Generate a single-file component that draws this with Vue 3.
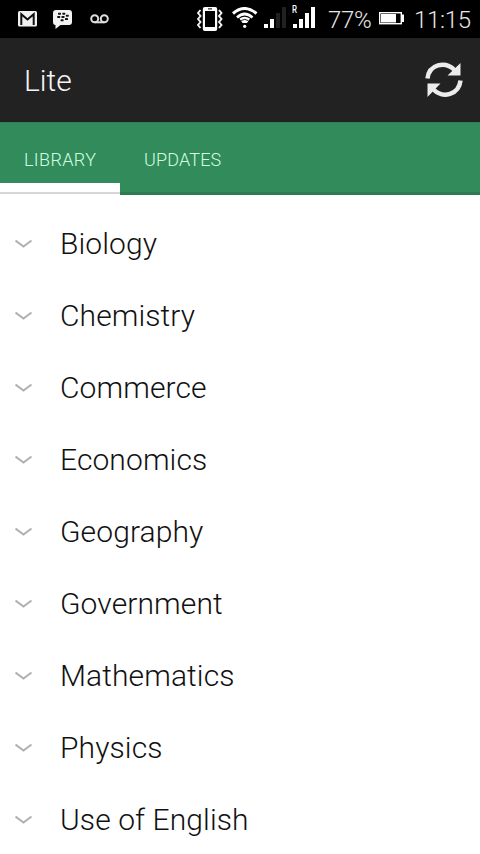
<script setup>
const subjects = [
  'Biology',
  'Chemistry',
  'Commerce',
  'Economics',
  'Geography',
  'Government',
  'Mathematics',
  'Physics',
  'Use of English',
]
</script>

<template>
  <div class="screen">
    <header class="status">
      <svg class="mail" width="20" height="16" viewBox="0 0 20 16">
        <rect width="19" height="15.5" rx="1.5" fill="#f2f2f2" />
        <path d="M3.300 14V3.200L9.500 8.500l6.200-5.300V14" fill="none" stroke="#111" stroke-width="2" />
      </svg>
      <svg class="bbm" width="20" height="20" viewBox="0 0 20 20">
        <path d="M3 0h13q3 0 3 3v9q0 3-3 3H7.500l-5 4v-4Q0 15 0 12V3q0-3 3-3z" fill="#f2f2f2" />
        <g fill="#111">
          <rect x="5" y="2.700" width="3" height="2" rx=".6" />
          <rect x="9.300" y="2.700" width="3" height="2" rx=".6" />
          <rect x="4.200" y="6" width="3" height="2" rx=".6" />
          <rect x="8.500" y="6" width="3" height="2" rx=".6" />
          <rect x="12.800" y="4.700" width="3" height="2" rx=".6" />
          <rect x="12" y="8" width="3" height="2" rx=".6" />
          <rect x="7.600" y="9.300" width="3" height="2" rx=".6" />
        </g>
      </svg>
      <svg class="voicemail" width="20" height="10" viewBox="0 0 20 10" fill="none" stroke="#ddd" stroke-width="2">
        <circle cx="4.700" cy="4.700" r="3.500" />
        <circle cx="14.300" cy="4.700" r="3.500" />
        <path d="M4.700 8.300h9.600" />
      </svg>

      <svg class="vibrate" width="26" height="26" viewBox="0 0 26 26">
        <rect x="5.800" y="1" width="14.400" height="24" rx="2" fill="#fff" />
        <rect x="8" y="5" width="10" height="16" fill="#000" />
        <path d="M11 2.900h4" stroke="#000" stroke-width="1" />
        <path d="M3.500 4 1 7l2.500 3L1 13l2.500 3L1 19l2.500 3M22 4l2.500 3L22 10l2.500 3L22 16l2.500 3L22 22" fill="none" stroke="#f4f4f4" stroke-width="1.900" />
      </svg>
      <svg class="wifi" width="26" height="22" viewBox="0 0 26 22" fill="none" stroke="#fff">
        <path d="M1 6.500Q12.500-3.500 24.500 6.500" stroke-width="3" />
        <path d="M5 10.500Q12.500 3.500 20.500 10.500" stroke-width="2.700" />
        <path d="M7.500 11.500Q12.500 8 18 11.500L15 16h-4.500z" fill="#fff" stroke="none" />
        <path d="M9.200 13.600Q12.700 11 16.300 13.600" stroke="#000" stroke-width=".9" />
        <circle cx="12.700" cy="19.300" r="1.600" fill="#fff" stroke="none" />
      </svg>
      <svg class="signal" width="24" height="23" viewBox="0 0 24 23" fill="#fff">
        <rect x="1" y="18" width="4" height="4" />
        <rect x="7" y="13" width="4" height="9" />
        <rect x="13" y="7" width="4" height="15" fill="#202020" />
        <rect x="19" y="1" width="4" height="21" fill="#202020" />
      </svg>
      <svg class="roaming" width="24" height="25" viewBox="0 0 24 25" fill="#fff">
        <rect x="1" y="20" width="4" height="4" />
        <rect x="7" y="15" width="4" height="9" />
        <rect x="13" y="9" width="4" height="15" />
        <rect x="19" y="3" width="4" height="21" />
        <text x="0" y="8.500" font-size="10" font-weight="500" textLength="5" lengthAdjust="spacingAndGlyphs">R</text>
      </svg>
      <span class="percent">77%</span>
      <svg class="battery" width="26" height="13" viewBox="0 0 26 13">
        <rect x=".7" y=".7" width="21.600" height="11" fill="none" stroke="#fff" stroke-width="1.400" />
        <rect x="2" y="2" width="15" height="8.500" fill="#fff" />
        <rect x="22" y="2.500" width="3" height="7.500" fill="#fff" />
      </svg>
      <span class="clock">11:15</span>
    </header>

    <div class="appbar">
      <h1>Lite</h1>
      <svg class="sync" width="38" height="38" viewBox="0 0 38 38">
        <g fill="none" stroke="#ececec" stroke-width="4.500">
          <path d="M2.500 17.500C4 3.500 20-.5 29.500 9" />
          <path d="M35.500 19.500C34 33.500 18 38 8.500 28.500" />
        </g>
        <path d="M35.500 2v12.500H22.500zM2.500 36V22.500h13z" fill="#ececec" />
      </svg>
    </div>

    <nav class="tabs">
      <button class="tab active">LIBRARY</button>
      <button class="tab updates">UPDATES</button>
    </nav>

    <ul class="list">
      <li v-for="subject in subjects" :key="subject">
        <svg width="18" height="12" viewBox="0 0 18 12">
          <path d="M.5 3.500 8.500 9.500l8-6" fill="none" stroke="#b0b0b0" stroke-width="2" />
        </svg>
        <span>{{ subject }}</span>
      </li>
    </ul>
  </div>
</template>

<style>
body {
  margin: 0;
  background: #fff;
}
</style>

<style scoped>
.screen {
  width: 480px;
  height: 854px;
  overflow: hidden;
  background: #fff;
  font-family: Roboto, sans-serif;
  font-weight: 300;
}
.status {
  display: flex;
  align-items: flex-start;
  height: 38px;
  background: #000;
  color: #e8e8e8;
}
.status svg,
.status span {
  flex: none;
}
.mail {
  margin: 11px 0 0 18px;
}
.bbm {
  margin: 10px 0 0 15px;
}
.voicemail {
  margin: 14px 0 0 17px;
}
.vibrate {
  margin: 6px 0 0 87px;
}
.wifi {
  margin: 7px 0 0 9px;
}
.signal {
  margin: 6px 0 0 5px;
}
.roaming {
  margin: 4px 0 0 5px;
}
.percent {
  width: 51px;
  margin-left: 12px;
  font-size: 24px;
  line-height: 40px;
  letter-spacing: -0.3px;
}
.battery {
  margin-top: 12px;
}
.clock {
  margin-left: 9px;
  font-size: 24px;
  line-height: 40px;
  letter-spacing: -0.3px;
}
.appbar {
  display: flex;
  align-items: center;
  justify-content: space-between;
  box-sizing: border-box;
  height: 84px;
  padding: 0 17px 0 24px;
  background: #222;
}
h1 {
  margin: 0;
  color: #f5f5f5;
  font-size: 30px;
  font-weight: 300;
}
.tabs {
  display: flex;
  box-sizing: border-box;
  height: 73px;
  background: #318b5a;
  border-top: 1px solid #3a7a57;
  box-shadow: inset 0 -3px #2b7c50;
}
.tab {
  box-sizing: border-box;
  height: 72px;
  padding: 2px 24px 0;
  border: 0;
  background: none;
  color: #d2ffe0;
  font: 300 18px/70px Roboto, sans-serif;
  letter-spacing: 0.35px;
  text-align: left;
  white-space: nowrap;
}
.updates {
  letter-spacing: 0.15px;
}
.active {
  width: 120px;
  background: linear-gradient(transparent 60px, #fff 60px 69px, #d9d5d9 69px 71px, #fff 71px);
}
.list {
  margin: 0;
  padding: 12px 0 0;
  list-style: none;
}
li {
  display: flex;
  align-items: center;
  height: 72px;
  padding-left: 15px;
  color: #111;
  font-size: 30px;
  letter-spacing: 0.1px;
}
li span {
  margin-left: 27px;
}
</style>
